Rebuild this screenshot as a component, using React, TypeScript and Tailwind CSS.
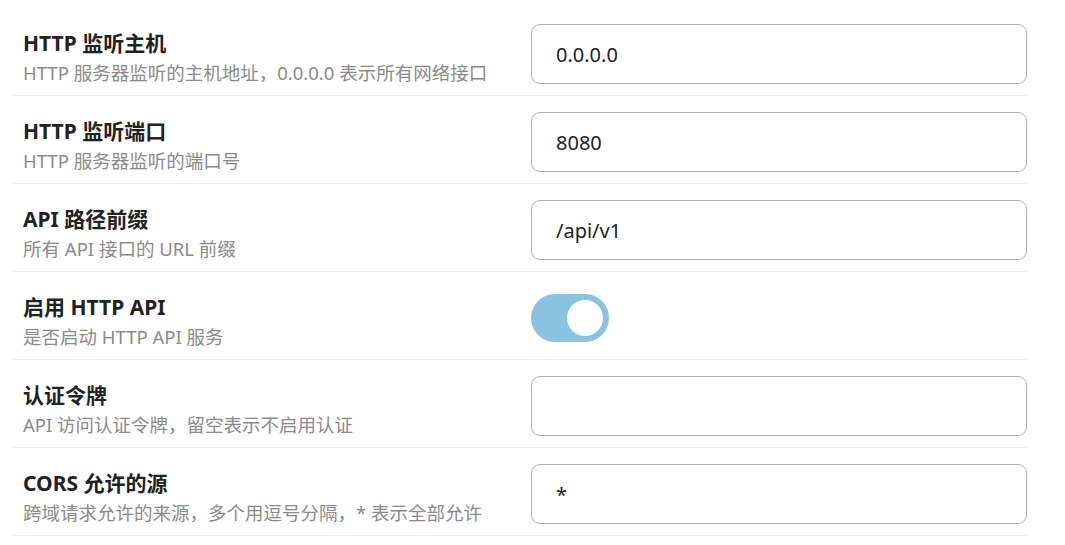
import React, { useState } from 'react';

interface Field {
  title: string;
  desc: string;
  value?: string;
  toggle?: boolean;
}

const fields: Field[] = [
  { title: 'HTTP 监听主机', desc: 'HTTP 服务器监听的主机地址，0.0.0.0 表示所有网络接口', value: '0.0.0.0' },
  { title: 'HTTP 监听端口', desc: 'HTTP 服务器监听的端口号', value: '8080' },
  { title: 'API 路径前缀', desc: '所有 API 接口的 URL 前缀', value: '/api/v1' },
  { title: '启用 HTTP API', desc: '是否启动 HTTP API 服务', toggle: true },
  { title: '认证令牌', desc: 'API 访问认证令牌，留空表示不启用认证', value: '' },
  { title: 'CORS 允许的源', desc: '跨域请求允许的来源，多个用逗号分隔，* 表示全部允许', value: '*' },
];

const Toggle: React.FC<{ on: boolean; onChange: (v: boolean) => void }> = ({ on, onChange }) => (
  <button
    type="button"
    onClick={() => onChange(!on)}
    className={`flex h-[48px] w-[78px] items-center rounded-full px-[6px] ${
      on ? 'justify-end bg-[#8ac2e1]' : 'justify-start bg-[#d5d5d5]'
    }`}
  >
    <span className="block h-[36px] w-[36px] rounded-full bg-white" />
  </button>
);

const Row: React.FC<{ field: Field }> = ({ field }) => {
  const [value, setValue] = useState(field.value ?? '');
  const [on, setOn] = useState(true);

  return (
    <div className="flex items-center border-b border-[#efefef] pl-3 pt-4 pb-[11px]">
      {/* Label */}
      <div className="-mb-1 flex flex-1 flex-col pt-1">
        <span className="text-[21px] font-bold leading-[30px] text-[#222]">{field.title}</span>
        <span className="text-[18.5px] leading-[30px] text-[#8a8a8a]">{field.desc}</span>
      </div>

      {/* Control */}
      <div className="flex h-[60px] w-[496px] items-center">
        {field.toggle ? (
          <Toggle on={on} onChange={setOn} />
        ) : (
          <input
            value={value}
            onChange={(e) => setValue(e.target.value)}
            className="h-[60px] w-full rounded-[9px] border border-[#b3b3b3] bg-white pl-6 text-[20px] text-[#222] outline-none"
          />
        )}
      </div>
    </div>
  );
};

export default function App() {
  return (
    <div
      className="min-h-screen bg-white pt-2"
      style={{ fontFamily: '"Noto Sans", "Noto Sans CJK SC", sans-serif' }}
    >
      <div className="ml-[11px] w-[1016px]">
        {fields.map((f) => (
          <Row key={f.title} field={f} />
        ))}
      </div>
    </div>
  );
}
